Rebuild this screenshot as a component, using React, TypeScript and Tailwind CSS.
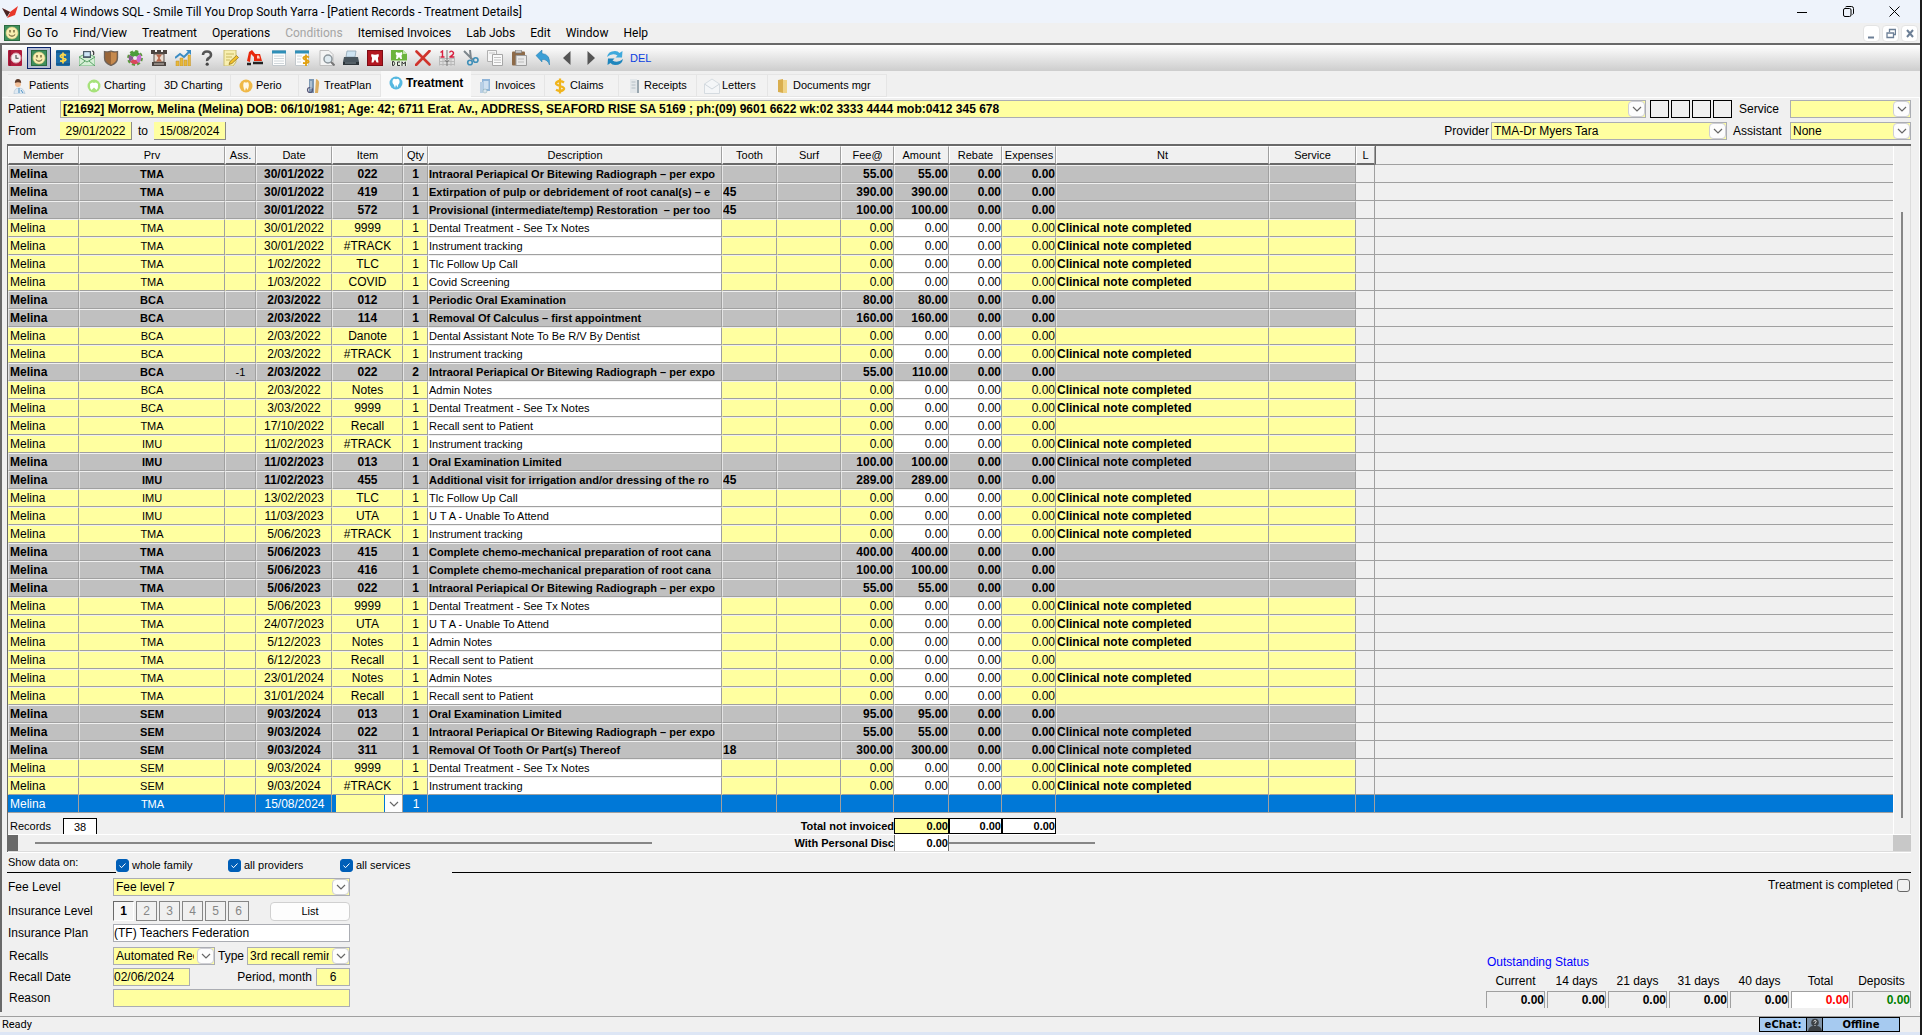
import { useState, type ReactNode } from 'react';
import clsx from 'clsx';

type Row = {
  prv: string;
  ass?: string;
  date: string;
  item: string;
  qty?: string;
  desc: string;
  tooth?: string;
  fee?: string;
  amount?: string;
  note?: boolean;
  billed?: boolean;
};

const XRAY = 'Intraoral Periapical Or Bitewing Radiograph – per expo';
const CHEMO = 'Complete chemo-mechanical preparation of root cana';

const rows: Row[] = [
  { prv: 'TMA', date: '30/01/2022', item: '022', desc: XRAY, fee: '55.00', billed: true },
  { prv: 'TMA', date: '30/01/2022', item: '419', desc: 'Extirpation of pulp or debridement of root canal(s) – e', tooth: '45', fee: '390.00', billed: true },
  { prv: 'TMA', date: '30/01/2022', item: '572', desc: 'Provisional (intermediate/temp) Restoration  – per too', tooth: '45', fee: '100.00', billed: true },
  { prv: 'TMA', date: '30/01/2022', item: '9999', desc: 'Dental Treatment - See Tx Notes', note: true },
  { prv: 'TMA', date: '30/01/2022', item: '#TRACK', desc: 'Instrument tracking', note: true },
  { prv: 'TMA', date: '1/02/2022', item: 'TLC', desc: 'Tlc Follow Up Call', note: true },
  { prv: 'TMA', date: '1/03/2022', item: 'COVID', desc: 'Covid Screening', note: true },
  { prv: 'BCA', date: '2/03/2022', item: '012', desc: 'Periodic Oral Examination', fee: '80.00', billed: true },
  { prv: 'BCA', date: '2/03/2022', item: '114', desc: 'Removal Of Calculus – first appointment', fee: '160.00', billed: true },
  { prv: 'BCA', date: '2/03/2022', item: 'Danote', desc: 'Dental Assistant Note To Be R/V By Dentist' },
  { prv: 'BCA', date: '2/03/2022', item: '#TRACK', desc: 'Instrument tracking', note: true },
  { prv: 'BCA', ass: '-1', date: '2/03/2022', item: '022', qty: '2', desc: XRAY, fee: '55.00', amount: '110.00', billed: true },
  { prv: 'BCA', date: '2/03/2022', item: 'Notes', desc: 'Admin Notes', note: true },
  { prv: 'BCA', date: '3/03/2022', item: '9999', desc: 'Dental Treatment - See Tx Notes', note: true },
  { prv: 'TMA', date: '17/10/2022', item: 'Recall', desc: 'Recall sent to Patient' },
  { prv: 'IMU', date: '11/02/2023', item: '#TRACK', desc: 'Instrument tracking', note: true },
  { prv: 'IMU', date: '11/02/2023', item: '013', desc: 'Oral Examination Limited', fee: '100.00', note: true, billed: true },
  { prv: 'IMU', date: '11/02/2023', item: '455', desc: 'Additional visit for irrigation and/or dressing of the ro', tooth: '45', fee: '289.00', billed: true },
  { prv: 'IMU', date: '13/02/2023', item: 'TLC', desc: 'Tlc Follow Up Call', note: true },
  { prv: 'IMU', date: '11/03/2023', item: 'UTA', desc: 'U T A - Unable To Attend', note: true },
  { prv: 'TMA', date: '5/06/2023', item: '#TRACK', desc: 'Instrument tracking', note: true },
  { prv: 'TMA', date: '5/06/2023', item: '415', desc: CHEMO, fee: '400.00', billed: true },
  { prv: 'TMA', date: '5/06/2023', item: '416', desc: CHEMO, fee: '100.00', billed: true },
  { prv: 'TMA', date: '5/06/2023', item: '022', desc: XRAY, fee: '55.00', billed: true },
  { prv: 'TMA', date: '5/06/2023', item: '9999', desc: 'Dental Treatment - See Tx Notes', note: true },
  { prv: 'TMA', date: '24/07/2023', item: 'UTA', desc: 'U T A - Unable To Attend', note: true },
  { prv: 'TMA', date: '5/12/2023', item: 'Notes', desc: 'Admin Notes', note: true },
  { prv: 'TMA', date: '6/12/2023', item: 'Recall', desc: 'Recall sent to Patient' },
  { prv: 'TMA', date: '23/01/2024', item: 'Notes', desc: 'Admin Notes', note: true },
  { prv: 'TMA', date: '31/01/2024', item: 'Recall', desc: 'Recall sent to Patient' },
  { prv: 'SEM', date: '9/03/2024', item: '013', desc: 'Oral Examination Limited', fee: '95.00', billed: true },
  { prv: 'SEM', date: '9/03/2024', item: '022', desc: XRAY, fee: '55.00', note: true, billed: true },
  { prv: 'SEM', date: '9/03/2024', item: '311', desc: 'Removal Of Tooth Or Part(s) Thereof', tooth: '18', fee: '300.00', note: true, billed: true },
  { prv: 'SEM', date: '9/03/2024', item: '9999', desc: 'Dental Treatment - See Tx Notes', note: true },
  { prv: 'SEM', date: '9/03/2024', item: '#TRACK', desc: 'Instrument tracking', note: true },
];

const columns: { label: string; width: string }[] = [
  { label: 'Member', width: 'w-[71px]' },
  { label: 'Prv', width: 'w-[146px]' },
  { label: 'Ass.', width: 'w-[31px]' },
  { label: 'Date', width: 'w-[76px]' },
  { label: 'Item', width: 'w-[71px]' },
  { label: 'Qty', width: 'w-[25px]' },
  { label: 'Description', width: 'w-[294px]' },
  { label: 'Tooth', width: 'w-[55px]' },
  { label: 'Surf', width: 'w-[64px]' },
  { label: 'Fee@', width: 'w-[53px]' },
  { label: 'Amount', width: 'w-[55px]' },
  { label: 'Rebate', width: 'w-[53px]' },
  { label: 'Expenses', width: 'w-[54px]' },
  { label: 'Nt', width: 'w-[213px]' },
  { label: 'Service', width: 'w-[87px]' },
  { label: 'L', width: 'w-[19px]' },
];

// ── Icons ──
const Svg = ({ children }: { children: ReactNode }) => (
  <svg viewBox="0 0 16 16" className="size-4 shrink-0" aria-hidden="true">{children}</svg>
);

const Smiley = () => (
  <Svg>
    <rect x=".5" y=".5" width="15" height="15" fill="#3f8f5c" stroke="#2b6b3f" />
    <circle cx="8" cy="8" r="6" fill="#f8eeb0" stroke="#d8c878" strokeWidth=".6" />
    <path d="M6 5v2.5M10 5v2.5" stroke="#5a4a20" strokeWidth="1.2" />
    <path d="M4.800 9.500q3.200 3.400 6.400 0" fill="none" stroke="#5a4a20" strokeWidth="1" />
  </Svg>
);

const tools: { name: string; icon: ReactNode }[] = [
  {
    name: 'Appointments',
    icon: (
      <Svg>
        <rect x="1" y="0" width="14" height="16" rx="1" fill="#b01c3c" />
        <path d="M3 0v16" stroke="#7a0f28" strokeWidth="1" />
        <circle cx="9" cy="8" r="5" fill="#f6eef0" stroke="#d8a0ac" />
        <path d="M9 5v3.300h2.600" fill="none" stroke="#444" strokeWidth="1.100" />
      </Svg>
    ),
  },
  { name: 'Patient', icon: <Smiley /> },
  {
    name: 'Accounts',
    icon: (
      <Svg>
        <rect x="1" y="0" width="14" height="16" rx="1" fill="#1b6ca8" />
        <path d="M1 2h14M1 14h14" stroke="#0f4a78" />
        <path d="M11 5.500Q8 3.500 6 5.200T8 8t2.400 2.300T5 10.800M8 2.500v11" fill="none" stroke="#ffd84a" strokeWidth="1.700" />
      </Svg>
    ),
  },
  {
    name: 'Mail',
    icon: (
      <Svg>
        <path d="M0 7l8-4 8 4v9H0z" fill="#d5efd5" stroke="#6db17a" />
        <rect x="4" y="1" width="8" height="7" fill="#4d5d6a" />
        <rect x="5.200" y="2.200" width="5.600" height="4" fill="#cfe6f7" />
        <path d="M0 7l8 5 8-5M0 16l6-5M16 16l-6-5" fill="none" stroke="#59a067" />
        <path d="M13 1q2.500 0 1.500 4" fill="none" stroke="#333" strokeWidth="1.200" />
      </Svg>
    ),
  },
  {
    name: 'Security',
    icon: (
      <Svg>
        <path d="M1.500 1.500Q5 2.500 8 1q3 1.500 6.500.5v6.500q0 5-6.500 7.500Q1.500 13 1.500 8z" fill="#9a6638" stroke="#6d6259" strokeWidth="1.300" />
        <path d="M8 2v12.500Q13.500 12 13.500 8V2.500Q10.500 3 8 2z" fill="#c68a4e" />
      </Svg>
    ),
  },
  {
    name: 'Setup',
    icon: (
      <Svg>
        <circle cx="8" cy="8" r="6.600" fill="none" stroke="#5b9a3c" strokeWidth="2.600" strokeDasharray="3 2.180" />
        <path d="M8 8L2.500 5A6 6 0 0 1 13 4z" fill="#4c9d3a" />
        <path d="M8 8l5-4a6 6 0 0 1-1.500 9z" fill="#c96ad0" />
        <path d="M8 8l3.500 5A6 6 0 0 1 3 11.500z" fill="#d9485c" />
        <path d="M8 8l-5 3.500A6 6 0 0 1 2.500 5z" fill="#8b5a8f" />
        <circle cx="8" cy="8" r="2" fill="#eee" />
      </Svg>
    ),
  },
  {
    name: 'Waiting room',
    icon: (
      <Svg>
        <path d="M0 0h4v2h2V0h4v2h2V0h4v4H0zM1 12h14v4H1z" fill="#4b4440" />
        <path d="M3 4h10v8H3z" fill="#e9ddd2" stroke="#5d534d" />
        <path d="M5 4.500h6L8.600 8l2.400 3.500H5L7.400 8z" fill="#b9694e" />
        <path d="M3 14h10" stroke="#cfc6bf" />
      </Svg>
    ),
  },
  {
    name: 'Reports',
    icon: (
      <Svg>
        <path d="M1 16v-5h3v5zM5 16V8h3v8zM9 16v-6h3v6zM13 16V5h2.500v11z" fill="#e8b83a" stroke="#c3922a" strokeWidth=".5" />
        <path d="M0 8l5-4 4 3 5-5" fill="none" stroke="#3a8cc4" strokeWidth="2" />
        <path d="M11 0h5v5z" fill="#3a8cc4" />
      </Svg>
    ),
  },
  {
    name: 'Help',
    icon: (
      <Svg>
        <path d="M4 5Q4 1.500 8 1.500T12 5q0 2-2 3T8.200 11" fill="none" stroke="#555" strokeWidth="2.600" />
        <circle cx="8.200" cy="14.200" r="1.600" fill="#444" />
      </Svg>
    ),
  },
  {
    name: 'Notes',
    icon: (
      <Svg>
        <path d="M1 0h12v12l-3 4H1z" fill="#f8efb0" stroke="#c9bd72" />
        <path d="M3 4h8M3 7h6M3 10h4" stroke="#c8b860" />
        <path d="M6 14.500l1-3 6.500-6 2 2-6.500 6z" fill="#f3c22c" stroke="#8a6a1c" strokeWidth=".7" />
      </Svg>
    ),
  },
  {
    name: 'Lab work',
    icon: (
      <Svg>
        <path d="M0 11L2 2l3-2 4 5 1 2-2 1-4-4-1 8z" fill="#e8280c" />
        <path d="M7 4h6l2 7H7z" fill="#e8280c" />
        <path d="M10 5.500h2l1 3h-3z" fill="#ffd0c0" />
        <path d="M6 13h10M0 14h4" stroke="#222" strokeWidth="2.400" />
      </Svg>
    ),
  },
  {
    name: 'Sheet',
    icon: (
      <Svg>
        <path d="M1.500.5h13v15h-13z" fill="#fdfdfd" stroke="#c2c8cc" />
        <path d="M1 2h14" stroke="#2f8fb8" strokeWidth="3" />
        <path d="M3 6h10M3 8.500h10M3 11h10M3 13.500h10" stroke="#cfd6da" />
      </Svg>
    ),
  },
  {
    name: 'Billing sheet',
    icon: (
      <Svg>
        <path d="M.5.500h13v15H.5z" fill="#fdfdfd" stroke="#c2c8cc" />
        <path d="M0 2h14" stroke="#2f8fb8" strokeWidth="3" />
        <path d="M2 6h5M2 9h4M2 12h4" stroke="#cfd6da" />
        <path d="M14 7.500Q11 5.500 9 7t2 2.900 2 2.500-5 .6M11 4.500v11.500" fill="none" stroke="#e0a010" strokeWidth="1.800" />
      </Svg>
    ),
  },
  {
    name: 'Preview',
    icon: (
      <Svg>
        <path d="M1 .5h9l4 4v11H1z" fill="#f4f4f4" stroke="#bdbdbd" />
        <circle cx="9" cy="9" r="4" fill="#dfeaf0" stroke="#8b959b" strokeWidth="1.500" />
        <path d="M12 12l3.500 3.500" stroke="#777" strokeWidth="2" />
      </Svg>
    ),
  },
  {
    name: 'Print',
    icon: (
      <Svg>
        <path d="M4 1h9l-1 6H3z" fill="#cfe4f2" stroke="#8fa5b2" strokeWidth=".8" />
        <path d="M1 7h14l1 5H0z" fill="#4a565e" />
        <path d="M0 12h16v3H0z" fill="#2d353a" />
        <path d="M2 13h11" stroke="#7f8c94" />
      </Svg>
    ),
  },
  {
    name: 'Tooth chart',
    icon: (
      <Svg>
        <rect x=".5" y=".5" width="15" height="15" fill="#b31720" stroke="#7d0c14" />
        <path d="M4.500 4Q8 5.500 11.500 4q1 2-.6 4l.6 4.500H9.700L8 9.500l-1.700 3H4.500L5.100 8Q3.500 6 4.500 4z" fill="#fff" />
      </Svg>
    ),
  },
  {
    name: 'DICOM',
    icon: (
      <Svg>
        <path d="M0 0h12l4 4v12H0z" fill="#6cb43c" />
        <path d="M12 0v4h4z" fill="#c6e5ae" />
        <path d="M5 2q3 1.500 6 0 1 2-.5 3.500L11 9H9.500L8 7 6.500 9H5l.5-3.500Q4 4 5 2z" fill="#fff" />
        <rect x="0" y="10.500" width="16" height="5.500" fill="#e6efe0" />
        <path d="M1.500 11.500v4h1.300q1.700-2 0-4zM9 12H6.500v3.500H9M11 16v-4.200l1.700 2.200 1.700-2.200V16" fill="none" stroke="#333" />
      </Svg>
    ),
  },
  { name: 'Delete', icon: <Svg><path d="M1.500 1.500l13 13M14.500 1L1 15" stroke="#d0342c" strokeWidth="2.600" strokeLinecap="round" /></Svg> },
  {
    name: 'Split',
    icon: (
      <Svg>
        <path d="M.5 8.500h15M.5 11.500h15M.5 14.500h15M.5 6v9.500M15.500 6v9.500M4 8v8M12 8v8" stroke="#b9b9b9" />
        <path d="M8 0v16" stroke="#777" />
        <path d="M1.500 2.500L3.500 1v6M1.500 7h4M10.500 2.500Q12 0 14 2t-3.500 5H15" fill="none" stroke="#d82040" strokeWidth="1.400" />
        <path d="M5.500 10l2.500 2 2.500-2" fill="none" stroke="#777" />
      </Svg>
    ),
  },
  {
    name: 'Cut',
    icon: (
      <Svg>
        <path d="M1 1l9 9M7 0l1 9" stroke="#7d868c" strokeWidth="2" />
        <circle cx="7" cy="12.500" r="2.300" fill="none" stroke="#3f8fb8" strokeWidth="1.600" />
        <circle cx="12.700" cy="10" r="2.300" fill="none" stroke="#3f8fb8" strokeWidth="1.600" />
      </Svg>
    ),
  },
  {
    name: 'Copy',
    icon: (
      <Svg>
        <path d="M.5.500h9v11h-9z" fill="#f6f6f6" stroke="#b0b0b0" />
        <path d="M5.500 4.500h10v11h-10z" fill="#fafafa" stroke="#a6a6a6" />
        <path d="M7 7.500h7M7 10h7M7 12.500h7M2 3h6" stroke="#c4c4c4" />
      </Svg>
    ),
  },
  {
    name: 'Paste',
    icon: (
      <Svg>
        <rect x="1" y="1.500" width="13" height="14" rx="1" fill="#8d6a48" />
        <rect x="4.500" y="0" width="6" height="3" fill="#c9c9c9" stroke="#777" strokeWidth=".6" />
        <path d="M5 5.500h10.500v10H5z" fill="#e9e9e9" stroke="#9b9b9b" />
        <path d="M7 9h6M7 12h6" stroke="#bbb" />
      </Svg>
    ),
  },
  {
    name: 'Undo',
    icon: (
      <Svg>
        <path d="M1 5.500L7 0v3.500q8.500.5 7.500 11.500-2-6-7.500-5.500V12z" fill="#3b9fd6" stroke="#2379aa" strokeWidth=".5" />
      </Svg>
    ),
  },
  { name: 'Previous', icon: <Svg><path d="M11.500 1v14L4 8z" fill="#555" /></Svg> },
  { name: 'Next', icon: <Svg><path d="M4.500 1v14L12 8z" fill="#555" /></Svg> },
  {
    name: 'Refresh',
    icon: (
      <Svg>
        <path d="M0 7q1-6 8-6 3 0 4.500 2L15.500 1l-.5 6.500H8.500l2-2Q5 2.500 0 7z" fill="#3fa9dc" />
        <path d="M16 9q-1 6-8 6-3 0-4.500-2L.5 15 1 8.500h6.500l-2 2Q11 13.500 16 9z" fill="#1f86bd" />
      </Svg>
    ),
  },
];

const tabs: { label: string; width: string; icon?: ReactNode }[] = [
  {
    label: 'Patients',
    width: 'w-[71px] pl-1',
    icon: (
      <Svg>
        <path d="M3 16q0-6 5-6t6 6z" fill="#dfe9f2" stroke="#a9bfd2" strokeWidth=".6" />
        <circle cx="7" cy="6" r="3" fill="#f2bf98" />
        <path d="M3.800 5Q4 1 7 1t3.200 4Q7 3.500 3.800 5z" fill="#5d3a28" />
        <path d="M8 10v5M10 12l2 3" stroke="#4a90c2" />
      </Svg>
    ),
  },
  {
    label: 'Charting',
    width: 'w-[77px] pl-2',
    icon: (
      <Svg>
        <circle cx="8" cy="8" r="6.500" fill="#a6e27a" />
        <path d="M4 6Q6 3.500 8 5q2-1.500 4 1 .5 4-1.500 6L8 9.500 5.500 12Q3.500 10 4 6z" fill="#fff" />
      </Svg>
    ),
  },
  { label: '3D Charting', width: 'w-[75px] pl-2' },
  {
    label: 'Perio',
    width: 'w-[68px] pl-2',
    icon: <Svg><circle cx="8" cy="8" r="6.500" fill="#efb848" /><path d="M6 4q2 1 4 0 2 3-.5 8L8 9.500 7 13Q4 8 6 4z" fill="#fff8e8" /></Svg>,
  },
  {
    label: 'TreatPlan',
    width: 'w-[82px] pl-2',
    icon: (
      <Svg>
        <path d="M3 1h5v14H3z" fill="#7d99b4" />
        <path d="M10 1q4 1 3 6l-1 8H9z" fill="#dcae60" />
        <circle cx="4" cy="12" r="2.500" fill="none" stroke="#557" strokeWidth="1.200" />
        <path d="M5 3v8" stroke="#dfe8f0" />
      </Svg>
    ),
  },
  {
    label: 'Treatment',
    width: 'w-[90px] pl-2',
    icon: (
      <Svg>
        <circle cx="8" cy="8" r="6.500" fill="#56b8e0" />
        <path d="M5 4.500Q6.500 3 8 4.200 9.500 3 11 4.500q1.500 3-.7 5.200L9.500 12.500 8 9.800 7 13l-1.200-3.300Q3.500 7.500 5 4.500z" fill="#fff" />
      </Svg>
    ),
  },
  {
    label: 'Invoices',
    width: 'w-[74px] pl-[7px]',
    icon: (
      <Svg>
        <path d="M5 1h8v12H5z" fill="#8fb4d8" />
        <path d="M6.500 3h5v8h-5z" fill="#cfe0f0" />
        <path d="M3 4h3v11H3z" fill="#b9cfe4" />
        <circle cx="8" cy="13" r="2" fill="#dbe6f0" stroke="#8aa" strokeWidth=".5" />
      </Svg>
    ),
  },
  {
    label: 'Claims',
    width: 'w-[74px] pl-2',
    icon: <Svg><path d="M12 4.500Q8 1.800 5 4t3 4 3.200 4T4 11.800M8 .5v15" fill="none" stroke="#f0b41c" strokeWidth="2.300" /></Svg>,
  },
  {
    label: 'Receipts',
    width: 'w-[78px] pl-2',
    icon: <Svg><path d="M4 1h7v14H4z" fill="#e3e7ea" /><path d="M11 2h2v13h-2z" fill="#9aa7b0" /><path d="M5.500 4h4M5.500 7h4M5.500 10h4" stroke="#b4bec5" /></Svg>,
  },
  {
    label: 'Letters',
    width: 'w-[71px] pl-2',
    icon: <Svg><path d="M.5 6L8 1l7.500 5v9.500H.5z" fill="#f4f6f8" stroke="#d5dbe0" /><path d="M.5 6L8 11l7.500-5" fill="none" stroke="#cfd6dc" /></Svg>,
  },
  {
    label: 'Documents mgr',
    width: 'w-[119px] pl-2',
    icon: <Svg><path d="M3 2l5-1v14l-5-1z" fill="#d9ae4e" /><path d="M8 2h4v13H8z" fill="#f0d488" /></Svg>,
  },
];

// ── Form controls ──
function Combo({ id, value, className, bold }: { id: string; value: string; className?: string; bold?: boolean }) {
  return (
    <div className={clsx('grid h-[18px] border border-[#abadb3] bg-[#ffffa0]', className)}>
      <select
        id={id}
        className={clsx('col-start-1 row-start-1 w-full min-w-0 appearance-none bg-transparent pr-5 pl-0.5 text-xs leading-4 outline-none', bold && 'font-bold')}
      >
        <option>{value}</option>
      </select>
      <span className="pointer-events-none col-start-1 row-start-1 flex h-4 w-[17px] items-center justify-center justify-self-end rounded-sm border border-[#cfcfd4] bg-[#fdfdfd]">
        <svg viewBox="0 0 10 6" className="h-[6px] w-[10px]" aria-hidden="true">
          <path d="M1 1l4 4 4-4" fill="none" stroke="#666" strokeWidth="1.200" />
        </svg>
      </span>
    </div>
  );
}

function Tick({ id, label }: { id: string; label: string }) {
  return (
    <div className="flex w-[112px] items-center gap-[3px]">
      <span className="grid">
        <input id={id} type="checkbox" defaultChecked className="peer col-start-1 row-start-1 size-[13px] appearance-none rounded-[3px] border border-[#666] checked:border-[#005fb8] checked:bg-[#005fb8]" />
        <svg viewBox="0 0 13 13" className="pointer-events-none invisible col-start-1 row-start-1 size-[13px] peer-checked:visible" aria-hidden="true">
          <path d="M3.500 6.500l2 2.200 4-4.200" fill="none" stroke="#fff" />
        </svg>
      </span>
      <label htmlFor={id} className="text-[11px] leading-4">{label}</label>
    </div>
  );
}

// ── Treatment grid ──
function TreatmentTable() {
  return (
    <table className="w-full table-fixed border-separate border-spacing-0 text-xs leading-4">
      <colgroup>
        {columns.map((c) => <col key={c.label + c.width} className={c.width} />)}
        <col />
      </colgroup>
      <thead>
        <tr className="h-[19px]">
          {columns.map((c) => (
            <th
              key={c.label + c.width}
              className="overflow-hidden border-t border-r border-b-2 border-l border-t-white border-r-[#a0a0a0] border-b-[#696969] border-l-white p-0 text-center text-[11px] leading-4 font-normal whitespace-nowrap"
            >
              {c.label}
            </th>
          ))}
          <td className="border-b border-l border-b-[#a0a0a0] border-l-[#696969] p-0" />
        </tr>
      </thead>
      <tbody>
        {rows.map((row, i) => <TreatmentRow key={i} row={row} />)}
        <tr className="h-[18px] bg-[#0078d7] text-white">
          <SelectedCell>Melina</SelectedCell>
          <SelectedCell className="text-center text-[11px]">TMA</SelectedCell>
          <SelectedCell />
          <SelectedCell className="text-center">15/08/2024</SelectedCell>
          <SelectedCell>
            <div className="flex h-[17px] pl-0.5">
              <input aria-label="Item" className="min-w-0 flex-1 bg-[#ffffa0] text-black outline-none" />
              <button aria-label="Choose item" className="flex w-[18px] items-center justify-center border-l border-[#0078d7] bg-[#fdfdfd]">
                <svg viewBox="0 0 10 6" className="h-[6px] w-[10px]" aria-hidden="true">
                  <path d="M1 1l4 4 4-4" fill="none" stroke="#666" strokeWidth="1.200" />
                </svg>
              </button>
            </div>
          </SelectedCell>
          <SelectedCell className="text-center">1</SelectedCell>
          {columns.slice(6).map((c) => <SelectedCell key={c.label} />)}
          <td className="border-b border-[#a0a0a0] p-0" />
        </tr>
      </tbody>
    </table>
  );
}

function SelectedCell({ children, className }: { children?: ReactNode; className?: string }) {
  return <td className={clsx('overflow-hidden border-r border-b border-[#a0a0a0] p-0 pl-0.5', className)}>{children}</td>;
}

function TreatmentRow({ row }: { row: Row }) {
  const fee = row.fee ?? '0.00';
  const cell = clsx(
    'overflow-hidden border-t border-r border-b border-l border-t-[#f0f0f0] border-r-[#a0a0a0] border-b-[#a0a0a0] p-0 whitespace-pre',
    row.billed ? 'border-l-[#e4e4e4]' : 'border-l-transparent',
  );
  const tint = row.billed ? 'bg-[#c0c0c0]' : 'bg-[#ffffa0]';
  const plain = row.billed ? 'bg-[#c0c0c0]' : 'bg-white';

  return (
    <tr className={clsx('h-[18px]', row.billed && 'font-bold')}>
      <td className={clsx(cell, tint, 'pl-px')}>Melina</td>
      <td className={clsx(cell, tint, 'text-center text-[11px]')}>{row.prv}</td>
      <td className={clsx(cell, tint, 'text-center text-[11px] font-normal')}>{row.ass}</td>
      <td className={clsx(cell, tint, 'text-center')}>{row.date}</td>
      <td className={clsx(cell, tint, 'text-center')}>{row.item}</td>
      <td className={clsx(cell, tint, 'text-center')}>{row.qty ?? '1'}</td>
      <td className={clsx(cell, plain, 'text-[11px]')}>{row.desc}</td>
      <td className={clsx(cell, tint)}>{row.tooth}</td>
      <td className={clsx(cell, tint)} />
      <td className={clsx(cell, tint, 'text-right')}>{fee}</td>
      <td className={clsx(cell, plain, 'text-right')}>{row.amount ?? fee}</td>
      <td className={clsx(cell, plain, 'text-right')}>0.00</td>
      <td className={clsx(cell, tint, 'text-right')}>0.00</td>
      <td className={clsx(cell, tint, 'font-bold')}>{row.note && 'Clinical note completed'}</td>
      <td className={clsx(cell, tint)} />
      <td className="border-r border-b border-[#a0a0a0] p-0" />
      <td className="border-b border-[#a0a0a0] p-0" />
    </tr>
  );
}

const menu = ['Go To', 'Find/View', 'Treatment', 'Operations', 'Conditions', 'Itemised Invoices', 'Lab Jobs', 'Edit', 'Window', 'Help'];

const balances: { label: string; className?: string }[] = [
  { label: 'Current' },
  { label: '14 days' },
  { label: '21 days' },
  { label: '31 days' },
  { label: '40 days' },
  { label: 'Total', className: 'bg-white text-[#ff0000]' },
  { label: 'Deposits', className: 'text-[#008000]' },
];

const yellowInput = 'h-[18px] border border-[#abadb3] bg-[#ffffa0] text-xs leading-4 outline-none';

export default function App() {
  const [tab, setTab] = useState('Treatment');
  const [level, setLevel] = useState(1);

  return (
    <div className="flex min-h-screen flex-col border-r-2 border-[#1c1c1c] bg-[#f0f0f0] font-['Liberation_Sans',Arial,sans-serif] text-xs text-black">
      {/* Title bar */}
      <header className="flex h-[23px] items-center bg-[#eef3fb] pl-[2px] font-[Roboto,'Noto_Sans',sans-serif]">
        <svg viewBox="0 0 18 16" className="h-4 w-[18px]" aria-hidden="true">
          <path d="M0 4l8 4 8-6-3 9-8 3 3-5z" fill="#e8392c" />
          <path d="M0 4l8 4-3 5z" fill="#4a2424" />
        </svg>
        <h1 className="ml-[3px] flex-1 text-xs leading-4">Dental 4 Windows SQL - Smile Till You Drop South Yarra - [Patient Records - Treatment Details]</h1>
        <div className="flex pr-[3px]">
          <button aria-label="Minimise" className="flex h-5 w-[46px] items-center justify-center">
            <svg viewBox="0 0 10 10" className="size-[10px]"><path d="M0 5.500h10" stroke="#000" /></svg>
          </button>
          <button aria-label="Restore" className="flex h-5 w-[46px] items-center justify-center">
            <svg viewBox="0 0 11 11" className="size-[11px]" fill="none" stroke="#000">
              <rect x=".5" y="2.500" width="7.500" height="8" rx="1.500" />
              <path d="M2.500 1Q3 .5 4 .5h4.500q2 0 2 2V7q0 1-1 1.500" />
            </svg>
          </button>
          <button aria-label="Close" className="flex h-5 w-[46px] items-center justify-center">
            <svg viewBox="0 0 11 11" className="size-[11px]"><path d="M.5.500l10 10M10.500.500l-10 10" stroke="#000" /></svg>
          </button>
        </div>
      </header>

      {/* Menu bar */}
      <nav className="flex h-5 items-center gap-[15px] pr-[2px] pl-1 font-[Roboto,'Noto_Sans',sans-serif]">
        <Smiley />
        {menu.map((m, i) => (
          <button key={m} disabled={m === 'Conditions'} className={clsx('text-xs leading-4 whitespace-nowrap disabled:text-[#a5a5a5]', i === 0 && '-ml-2')}>
            {m}
          </button>
        ))}
        <div className="ml-auto flex gap-[2px]">
          {['M1 9.500h6', 'M3.500 4V1.500h6v5H8M1 5h6.500v4.500H1z', 'M2 2l6 7M8 2L2 9'].map((d, i) => (
            <button key={d} aria-label={['Minimise child', 'Restore child', 'Close child'][i]} className="flex size-[17px] items-center justify-center rounded-sm border border-[#e4e4e4] bg-white">
              <svg viewBox="0 0 10 11" className="h-[11px] w-[10px]"><path d={d} fill="none" stroke="#6c7f96" strokeWidth={i === 1 ? 1.3 : 2} /></svg>
            </button>
          ))}
        </div>
      </nav>

      <main className="flex flex-1 flex-col border-t-2 border-l-2 border-[#696969]">
        {/* Toolbar */}
        <div className="flex h-[26px] items-center bg-linear-to-b from-white to-[#cdcdcd] pl-px">
          {tools.map((t) => (
            <button
              key={t.name}
              title={t.name}
              className={clsx('flex h-[22px] w-6 items-center justify-center border', t.name === 'Patient' ? 'border-[#0a246a] bg-[#b6bdd2]' : 'border-transparent')}
            >
              {t.icon}
            </button>
          ))}
          <button className="ml-[3px] text-[11px] text-[#0a3fe0]">DEL</button>
        </div>

        {/* Tabs */}
        <div role="tablist" className="flex h-[26px] items-end pl-[6px]">
          {tabs.map((t) => (
            <button
              key={t.label}
              role="tab"
              aria-selected={tab === t.label}
              onClick={() => setTab(t.label)}
              className={clsx(
                'flex items-center gap-[3px] whitespace-nowrap',
                t.width,
                tab === t.label ? 'h-[26px] bg-[#f9f9f9] pb-[2px] text-xs font-bold' : 'h-[23px] border border-l-0 border-[#e5e5e5] bg-[#f2f2f2] text-[11px]',
              )}
            >
              {t.icon && <span className="flex size-[14px] items-center justify-center">{t.icon}</span>}
              {t.label}
            </button>
          ))}
        </div>

        <div className="flex flex-1 flex-col border-t border-r border-white pt-[2px] pr-2 pl-[5px]">
          {/* Patient */}
          <div className="flex items-center">
            <label htmlFor="patient" className="w-[53px] pl-px">Patient</label>
            <Combo
              id="patient"
              bold
              className="min-w-0 flex-1"
              value="[21692] Morrow, Melina (Melina) DOB: 06/10/1981; Age: 42; 6711 Erat. Av., ADDRESS, SEAFORD RISE SA 5169 ; ph:(09) 9601 6622 wk:02 3333 4444 mob:0412 345 678"
            />
            <div className="ml-1 flex gap-[2px]">
              {[0, 1, 2, 3].map((n) => <span key={n} className="h-[18px] w-[19px] border border-black" />)}
            </div>
            <label htmlFor="service" className="w-[58px] pl-[7px]">Service</label>
            <Combo id="service" value="" className="w-[121px]" />
          </div>
          <div className="mt-1 flex items-center">
            <label htmlFor="from" className="w-[53px] pl-px">From</label>
            <input id="from" defaultValue="29/01/2022" className="h-[18px] w-[72px] border-r border-b border-[#8a8a8a] bg-[#ffffa0] text-center outline-none" />
            <label htmlFor="to" className="w-[22px] text-center">to</label>
            <input id="to" defaultValue="15/08/2024" className="h-[18px] w-[72px] border-r border-b border-[#8a8a8a] bg-[#ffffa0] text-center outline-none" />
            <label htmlFor="provider" className="mr-[2px] ml-auto">Provider</label>
            <Combo id="provider" value="TMA-Dr Myers Tara" className="w-[236px]" />
            <label htmlFor="assistant" className="w-[63px] pl-[6px]">Assistant</label>
            <Combo id="assistant" value="None" className="w-[121px]" />
          </div>

          {/* Grid */}
          <section className="mt-1 border-t-2 border-l border-[#696969]">
            <div className="flex border-b border-b-white">
              <div className="min-w-0 flex-1">
                <TreatmentTable />
                <div className="flex items-end pt-[5px] text-[11px] leading-4">
                  <div className="flex w-[886px] items-end">
                    <span className="w-[55px] pl-0.5">Records</span>
                    <output className="h-4 w-[34px] border border-b-0 border-black bg-white text-center">38</output>
                    <span className="ml-auto font-bold">Total not invoiced</span>
                  </div>
                  <output className="h-4 w-[55px] border border-black bg-[#ffffa0] text-right leading-[14px] font-bold">0.00</output>
                  <output className="h-4 w-[53px] border border-black bg-white text-right leading-[14px] font-bold">0.00</output>
                  <output className="h-4 w-[54px] border border-black bg-white text-right leading-[14px] font-bold">0.00</output>
                </div>
              </div>
              <div className="flex w-[18px] justify-center border-r border-l border-r-[#dcdcdc] border-l-white pt-[66px] pb-4">
                <div className="w-[2px] bg-[#868686]" />
              </div>
            </div>
            <div className="flex h-[17px] items-center border-b border-[#dcdcdc] text-[11px] font-bold">
              <div className="flex w-[886px] items-center">
                <div className="h-4 w-[10px] bg-[#696969]" />
                <div className="ml-[17px] h-[2px] w-[617px] bg-[#868686]" />
                <span className="ml-auto">With Personal Disc</span>
              </div>
              <output className="h-4 w-[55px] border-r border-l border-[#696969] bg-white text-right leading-4">0.00</output>
              <div className="h-[2px] w-[146px] bg-[#868686]" />
              <div className="ml-auto h-4 w-[18px] bg-[#c8c8c8]" />
            </div>
          </section>

          {/* Filters */}
          <div className="flex h-[21px] items-end border-t border-white">
            <span className="w-[109px] border-b border-black pb-[2px] pl-px text-[11px] leading-4">Show data on:</span>
            <div className="flex w-[336px]">
              <Tick id="family" label="whole family" />
              <Tick id="providers" label="all providers" />
              <Tick id="services" label="all services" />
            </div>
            <div className="flex-1 border-b border-black" />
          </div>

          <div className="flex flex-1 justify-between">
            <div className="flex w-[343px] flex-col pt-[5px] pl-px">
              <div className="flex items-center">
                <label htmlFor="fee-level" className="w-[105px]">Fee Level</label>
                <Combo id="fee-level" value="Fee level 7" className="flex-1" />
              </div>
              <div className="mt-[5px] flex items-center">
                <span className="w-[105px]">Insurance Level</span>
                <div className="flex gap-[2px]">
                  {[1, 2, 3, 4, 5, 6].map((n) => (
                    <button
                      key={n}
                      onClick={() => setLevel(n)}
                      className={clsx('h-5 w-[21px] border', n === level ? 'border-t-[#696969] border-r-white border-b-white border-l-[#696969] bg-[#f5f5f5] font-bold' : 'border-[#868686] text-[#868686]')}
                    >
                      {n}
                    </button>
                  ))}
                </div>
                <button className="ml-auto h-[19px] w-20 rounded border border-[#d0d0d0] bg-[#fdfdfd] text-[11px]">List</button>
              </div>
              <div className="mt-[3px] flex items-center">
                <label htmlFor="plan" className="w-[105px]">Insurance Plan</label>
                <input id="plan" defaultValue="(TF) Teachers Federation" className="h-[18px] min-w-0 flex-1 border border-[#abadb3] bg-white outline-none" />
              </div>
              <div className="mt-[5px] flex items-center">
                <label htmlFor="recalls" className="w-[105px] pl-px">Recalls</label>
                <Combo id="recalls" value="Automated Recall" className="w-[102px]" />
                <label htmlFor="recall-type" className="w-8 text-center">Type</label>
                <Combo id="recall-type" value="3rd recall reminder" className="w-[103px]" />
              </div>
              <div className="mt-[3px] flex items-center">
                <label htmlFor="recall-date" className="w-[105px] pl-px">Recall Date</label>
                <input id="recall-date" defaultValue="02/06/2024" className={clsx(yellowInput, 'w-[77px]')} />
                <label htmlFor="period" className="mr-1 ml-auto">Period, month</label>
                <input id="period" defaultValue="6" className={clsx(yellowInput, 'w-[34px] text-center')} />
              </div>
              <div className="mt-[3px] flex items-center">
                <label htmlFor="reason" className="w-[105px] pl-px">Reason</label>
                <input id="reason" className={clsx(yellowInput, 'min-w-0 flex-1')} />
              </div>
            </div>

            <div className="flex flex-col items-end justify-between pt-1 pb-1">
              <div className="flex items-center gap-1 pr-px">
                <label htmlFor="completed">Treatment is completed</label>
                <input id="completed" type="checkbox" className="size-[13px] appearance-none rounded-[3px] border border-[#666] checked:bg-[#005fb8]" />
              </div>
              <div>
                <h2 className="pl-px leading-4 text-[#0000ff]">Outstanding Status</h2>
                <dl className="mt-[3px] flex gap-[2px]">
                  {balances.map((b) => (
                    <div key={b.label} className="w-[59px]">
                      <dt className="text-center leading-4">{b.label}</dt>
                      <dd className={clsx('mt-[2px] h-[17px] border border-b-0 border-[#a0a0a0] text-right leading-4 font-bold', b.className)}>0.00</dd>
                    </div>
                  ))}
                </dl>
              </div>
            </div>
          </div>
        </div>
      </main>

      {/* Status bar */}
      <footer className="mt-1 flex h-4 items-center justify-between border-t border-[#a0a0a0] pl-[2px] font-[Roboto,'Noto_Sans',sans-serif]">
        <span className="text-[11px] leading-[15px]">Ready</span>
        <div className="mr-5 flex h-[15px] border border-black bg-[#a6caf0] font-['DejaVu_Sans',sans-serif] text-[10px] leading-[13px] font-bold">
          <span className="w-[46px] text-center">eChat:</span>
          <span className="flex w-[17px] items-center justify-center border-x border-black bg-[#7f93a8]">
            <svg viewBox="0 0 14 13" className="h-[13px] w-[14px]" aria-hidden="true">
              <circle cx="7" cy="4.500" r="3.800" fill="#3c4146" />
              <path d="M0 13q1-5 5-5h4q4 0 5 5z" fill="#3c4146" />
              <path d="M5.800 3.600Q6 2.300 7.200 2.400t1 1.600L7 5.200V6M7 7v1" fill="none" stroke="#ddd" />
            </svg>
          </span>
          <span className="w-[76px] text-center">Offline</span>
        </div>
      </footer>
      <div className="h-[3px] bg-[#dde6f5]" />
    </div>
  );
}
